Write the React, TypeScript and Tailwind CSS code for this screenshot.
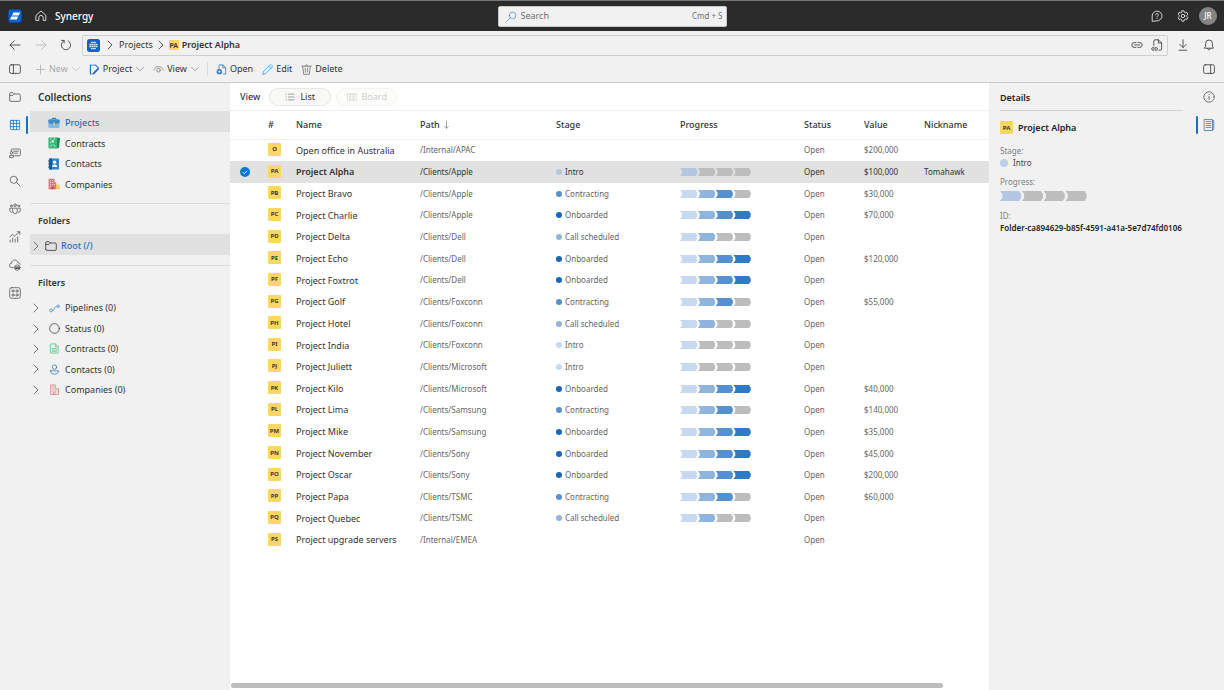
import { ReactNode } from "react";
import clsx from "clsx";

// Small line icons drawn on a 12px grid
function Icon({ children, className }: { children: ReactNode; className?: string }) {
  return (
    <svg
      viewBox="0 0 12 12"
      fill="none"
      stroke="currentColor"
      strokeWidth="0.8"
      strokeLinecap="round"
      strokeLinejoin="round"
      className={clsx("shrink-0", className)}
      aria-hidden="true"
    >
      {children}
    </svg>
  );
}

const paths = {
  home: <path d="M1.2 5.2 6 1l4.8 4.2v5.2h-2.6V7.6a2.2 2.2 0 0 0-4.4 0v2.8H1.2z" />,
  help: (
    <>
      <path d="M1.2 10.9V6A4.9 4.9 0 1 1 6 10.9z" />
      <path d="M4.7 4.8c0-1.8 2.7-1.7 2.7 0C7.4 5.8 6 5.9 6 7M6 8.5v.1" />
    </>
  ),
  gear: (
    <>
      <path d="m5 .8h2l.4 1.5 1 .6 1.5-.5 1 1.8-1.1 1.1v1.3l1.1 1.1-1 1.8-1.5-.5-1 .6L7 11.2H5l-.4-1.6-1-.6-1.5.5-1-1.8 1.1-1.1V5.3L1.1 4.2l1-1.8 1.5.5 1-.6z" />
      <circle cx="6" cy="6" r="1.7" />
    </>
  ),
  back: <path d="M11 6H1M5.2 1.8 1 6l4.2 4.2" />,
  forward: <path d="M1 6h10M6.8 1.8 11 6l-4.2 4.2" />,
  refresh: <path d="M1.6 1.4h2.6V4M8.2 1.9a4.7 4.7 0 1 1-4.3-.1" />,
  chevron: <path d="M4 2l4 4-4 4" />,
  down: <path d="M1.8 4 6 8.2 10.2 4" />,
  panelLeft: (
    <>
      <rect x=".6" y="1.8" width="10.8" height="8.6" rx="1.6" />
      <path d="M4.4 1.8v8.6" />
    </>
  ),
  panelRight: (
    <>
      <rect x=".6" y="1.8" width="10.8" height="8.6" rx="1.6" />
      <path d="M7.6 1.8v8.6" />
    </>
  ),
  plus: <path d="M6 1.2v9.6M1.2 6h9.6" />,
  project: (
    <>
      <path d="M5 10.8H1.6V1.2h5.2l3.4 3" />
      <path d="M6.8 1.2h.6l3 3.2v1.2l-4.6 5-1.2.2.4-1.6 5-4.8" fill="currentColor" />
      <path d="M1.6 1.2v9.6" strokeWidth="1.2" />
    </>
  ),
  eye: (
    <>
      <path d="M.8 6.6C2 3.8 4 2.8 6 2.8s4 1 5.2 3.8" />
      <circle cx="6" cy="6.8" r="2" />
    </>
  ),
  open: (
    <>
      <path d="M3.4 4.6V1h4l3.2 3.2V11H8M7.4 1v3.2h3.2" />
      <circle cx="3.6" cy="8.4" r="2.9" fill="currentColor" stroke="none" />
      <path d="M3.6 7v2.8M2.2 8.4H5" stroke="#fff" />
    </>
  ),
  edit: <path d="m1 11 .8-3.2L8.4 1.2a1.3 1.3 0 0 1 2 0l.4.4a1.3 1.3 0 0 1 0 2L4.2 10.2zM7.2 2.4l2.4 2.4" />,
  trash: <path d="M.8 2.4h10.4M4.4 2.4c0-2 3.2-2 3.2 0M1.9 2.4l1 8.8h6.2l1-8.8M4.8 4.6v4.2M7.2 4.6v4.2" />,
  link: <path d="M5 8.4H3.2a2.4 2.4 0 0 1 0-4.8H5M7 3.6h1.8a2.4 2.4 0 0 1 0 4.8H7M3.6 6h4.8" />,
  fileLink: (
    <>
      <path d="M2.8 6.6V2A1.2 1.2 0 0 1 4 .8h3.4l3.2 3.2v6A1.2 1.2 0 0 1 9.4 11.2H8M7.4.8V4h3.2" />
      <path d="M2.8 11.2H2a1.3 1.3 0 0 1 0-2.6h.8M4.4 8.6h.8a1.3 1.3 0 0 1 0 2.6h-.8M2.6 9.9h2" />
    </>
  ),
  download: <path d="M6 .8v7.6M2.8 5.4 6 8.6l3.2-3.2M2 11.2h8" />,
  bell: <path d="M1.6 9.2h8.8L9.4 7V4.4a3.4 3.4 0 0 0-6.8 0V7zM4.6 9.4c.2 2 2.6 2 2.8 0" />,
  folder: <path d="M.7 9.2V2.8a1.2 1.2 0 0 1 1.2-1.2h2l1.4 1.4h4.8a1.2 1.2 0 0 1 1.2 1.2v5a1.2 1.2 0 0 1-1.2 1.2H1.9A1.2 1.2 0 0 1 .7 9.2M.9 4.4h3L5.3 3" />,
  grid: (
    <>
      <rect x="1.4" y="1.4" width="9.2" height="9.2" rx=".8" />
      <path d="M4.4 1.4v9.2M7.6 1.4v9.2M1.4 4.4h9.2M1.4 7.6h9.2" />
    </>
  ),
  chat: (
    <>
      <path d="M2.2 4V3.2A1.2 1.2 0 0 1 3.4 2h6.8a1.2 1.2 0 0 1 1.2 1.2v4.4a1.2 1.2 0 0 1-1.2 1.2H5.8M4.6 4.2h4.8M5.6 6.2h3" />
      <circle cx="2.6" cy="5.8" r="1.3" />
      <path d="M.7 10.2V8.4h3.8v1.8q-1.9 1-3.8 0z" />
    </>
  ),
  search: (
    <>
      <circle cx="4.8" cy="4.8" r="3.6" />
      <path d="m7.5 7.5 3.6 3.6" />
    </>
  ),
  people: (
    <>
      <circle cx="6" cy="2.2" r="1.3" />
      <circle cx="2.3" cy="2.9" r="1" />
      <circle cx="9.7" cy="2.9" r="1" />
      <path d="M3.8 5.2h4.4v3.4a2.2 2.2 0 0 1-4.4 0zM2.4 5.2H.8v2.4a2 2 0 0 0 1.8 1.8M9.6 5.2h1.6v2.4a2 2 0 0 1-1.8 1.8" />
    </>
  ),
  chart: <path d="M1.2 9v2M3.7 7v4M6.2 8.2V11M8.7 5.8V11M.8 5.8l2.6-2.4 2 1.8L10.8.9M8.2.8h2.7v2.6" />,
  cloud: (
    <>
      <path d="M4.4 8.6H2.8a2.2 2.2 0 0 1-.2-4.4C2.8 0 8.6 0 9 3.8c1.2 0 2 .6 2.2 1.6" />
      <circle cx="8.3" cy="8.6" r="2.7" />
      <path d="M6.2 8h4M6.6 9.4h3.4" strokeWidth="1.2" />
    </>
  ),
  apps: (
    <>
      <rect x=".7" y=".7" width="10.6" height="10.6" rx="1.8" />
      <circle cx="4" cy="4" r="1.1" />
      <circle cx="8" cy="4" r="1.1" />
      <circle cx="4" cy="8" r="1.1" />
      <circle cx="8" cy="8" r="1.1" />
    </>
  ),
  pipeline: (
    <>
      <circle cx="2.2" cy="8.2" r="1.6" />
      <circle cx="9.9" cy="3.5" r="1.4" />
      <path d="M3.9 8.2C6.8 8.2 5.2 3.5 8.4 3.5" />
    </>
  ),
  circle: <circle cx="6" cy="6" r="5.3" />,
  doc: <path d="M2 1h5l3 3v7H2zM7 1v3h3M3.8 6h4.4M3.8 7.7h4.4M3.8 9.4h4.4" strokeWidth="0.7" />,
  person: (
    <>
      <circle cx="6" cy="3.4" r="2.4" />
      <path d="M1.6 7.4h8.8c.4 5-9.2 5-8.8 0z" />
    </>
  ),
  building: <path d="M1.8 11V1h5v4.2h3.6V11zM3.3 2.8h.4M5 2.8h.4M3.3 4.6h.4M5 4.6h.4M3.3 6.4h.4M5 6.4h.4M6.9 6.8h.3M8.8 6.8h.3M3.3 8.4h.4M5.2 8.4h.4M6.9 8.6h.3M8.8 8.6h.3M4.4 11V9.6h2.2V11" />,
  info: (
    <>
      <circle cx="6" cy="6" r="5.2" />
      <path d="M6 5.4v3.2M6 3.4v.1" />
    </>
  ),
  properties: <path d="M1.5.5h8v11h-8zM9.5 1.5h1.2v9H9.5M3 2.5h5M3 4.5h5M3 6.5h5M3 8.5h5" strokeWidth="0.7" />,
  list: <path d="M4 2.6h7M4 6h7M4 9.4h7M1.2 2.6h.3M1.2 6h.3M1.2 9.4h.3" />,
  board: <path d="M1 2h2.4v8H1zM4.8 2h2.4v8H4.8zM8.6 2H11v8H8.6z" />,
  sort: <path d="M6 1v10M3.6 8.6 6 11l2.4-2.4" />,
};

type IconName = keyof typeof paths;

function Glyph({ name, className, size = "size-3" }: { name: IconName; className?: string; size?: string }) {
  return <Icon className={clsx(size, className)}>{paths[name]}</Icon>;
}

function IconButton({ name, label, className }: { name: IconName; label: string; className?: string }) {
  return (
    <button aria-label={label} className={clsx("flex shrink-0", className)}>
      <Glyph name={name} />
    </button>
  );
}

const briefcase = (
  <svg viewBox="0 0 12 12" className="size-3 shrink-0" aria-hidden="true">
    <path d="M4 3V1.4h4V3" fill="none" stroke="#2a6fb0" />
    <rect x=".4" y="2.6" width="11.2" height="8.4" rx="1" fill="#83b9ea" />
    <path d="M.4 3.4q0-.8.8-.8h9.6q.8 0 .8.8V6L6 7.4.4 6z" fill="#3c8bd0" />
    <path d="M5.2 5.4h1.6v2.2L6 8.6l-.8-1z" fill="#ffd04d" />
  </svg>
);

const contract = (
  <svg viewBox="0 0 12 12" className="size-3 shrink-0" aria-hidden="true">
    <path d="m8 .6 4 .4-1 9.8-3 .6z" fill="#138a4f" />
    <rect x=".4" y=".4" width="8.8" height="11.2" rx=".8" fill="#3db77b" />
    <path d="M2 2h1.2M2 5.4h1.2M5.8 2h1.2M2.4 9.4 4 7.6M5.6 7.6l1.6 2" stroke="#e2f6ea" strokeWidth=".9" />
    <circle cx="4.8" cy="4.4" r="1.3" fill="#e2f6ea" />
  </svg>
);

const contact = (
  <svg viewBox="0 0 12 12" className="size-3 shrink-0" aria-hidden="true">
    <rect x="1" y=".4" width="10" height="11.2" rx=".8" fill="#2f86cf" />
    <path d="M1 1.2q0-.8.8-.8H4v11.2H1.8q-.8 0-.8-.8z" fill="#175b9c" />
    <path d="M0 3h1.6M0 6h1.6M0 9h1.6" stroke="#175b9c" />
    <circle cx="6.6" cy="4.2" r="1.6" fill="#fff" />
    <path d="M4 9c0-3.2 5.2-3.2 5.2 0z" fill="#fff" />
  </svg>
);

const company = (
  <svg viewBox="0 0 12 12" className="size-3 shrink-0" aria-hidden="true">
    <path d="M.6.8h6v3.4h1.6v7H.6z" fill="#e0767a" />
    <path d="M8 6.6h3.6v4.6H8z" fill="#f6c544" />
    <path d="M2 2.6h1M4.2 2.6h1M2 4.6h1M4.2 4.6h1M2 6.6h1M4.2 6.6h1M2 8.6h1M6 6.6h1" stroke="#fbe3e3" />
    <path d="M3.6 11.2V9h1.8v2.2z" fill="#a83c46" />
    <path d="M9 8h.8M10.4 8h.6M9 9.8h.8" stroke="#fff3cf" strokeWidth=".8" />
  </svg>
);

const collections = [
  { label: "Projects", icon: briefcase },
  { label: "Contracts", icon: contract },
  { label: "Contacts", icon: contact },
  { label: "Companies", icon: company },
];

const filters: { label: string; icon: IconName; color: string }[] = [
  { label: "Pipelines (0)", icon: "pipeline", color: "text-[#3a96dd]" },
  { label: "Status (0)", icon: "circle", color: "text-[#333]" },
  { label: "Contracts (0)", icon: "doc", color: "text-[#3fb877]" },
  { label: "Contacts (0)", icon: "person", color: "text-[#2a72b8]" },
  { label: "Companies (0)", icon: "building", color: "text-[#e57373]" },
];

const railItems: { icon: IconName; label: string }[] = [
  { icon: "folder", label: "Folders" },
  { icon: "grid", label: "Collections" },
  { icon: "chat", label: "Chat" },
  { icon: "search", label: "Search" },
  { icon: "people", label: "Teams" },
  { icon: "chart", label: "Reports" },
  { icon: "cloud", label: "Storage" },
  { icon: "apps", label: "Apps" },
];

const stages = ["Intro", "Call scheduled", "Contracting", "Onboarded"];
const stageColors = ["#c7d9f0", "#8fb4de", "#5590d0", "#1068bf"];
const stepColors = ["#c7d9f0", "#8fb4de", "#5590d0", "#2f7ac6"];

type Row = { code: string; name: string; path: string; stage?: number; value?: string; nickname?: string };

const rows: Row[] = [
  { code: "O", name: "Open office in Australia", path: "/Internal/APAC", value: "$200,000" },
  { code: "PA", name: "Project Alpha", path: "/Clients/Apple", stage: 0, value: "$100,000", nickname: "Tomahawk" },
  { code: "PB", name: "Project Bravo", path: "/Clients/Apple", stage: 2, value: "$30,000" },
  { code: "PC", name: "Project Charlie", path: "/Clients/Apple", stage: 3, value: "$70,000" },
  { code: "PD", name: "Project Delta", path: "/Clients/Dell", stage: 1 },
  { code: "PE", name: "Project Echo", path: "/Clients/Dell", stage: 3, value: "$120,000" },
  { code: "PF", name: "Project Foxtrot", path: "/Clients/Dell", stage: 3 },
  { code: "PG", name: "Project Golf", path: "/Clients/Foxconn", stage: 2, value: "$55,000" },
  { code: "PH", name: "Project Hotel", path: "/Clients/Foxconn", stage: 1 },
  { code: "PI", name: "Project India", path: "/Clients/Foxconn", stage: 0 },
  { code: "PJ", name: "Project Juliett", path: "/Clients/Microsoft", stage: 0 },
  { code: "PK", name: "Project Kilo", path: "/Clients/Microsoft", stage: 3, value: "$40,000" },
  { code: "PL", name: "Project Lima", path: "/Clients/Samsung", stage: 2, value: "$140,000" },
  { code: "PM", name: "Project Mike", path: "/Clients/Samsung", stage: 3, value: "$35,000" },
  { code: "PN", name: "Project November", path: "/Clients/Sony", stage: 3, value: "$45,000" },
  { code: "PO", name: "Project Oscar", path: "/Clients/Sony", stage: 3, value: "$200,000" },
  { code: "PP", name: "Project Papa", path: "/Clients/TSMC", stage: 2, value: "$60,000" },
  { code: "PQ", name: "Project Quebec", path: "/Clients/TSMC", stage: 1 },
  { code: "PS", name: "Project upgrade servers", path: "/Internal/EMEA" },
];

function Progress({ stage, muted, className }: { stage: number; muted?: boolean; className: string }) {
  return (
    <svg viewBox="0 0 71 8" preserveAspectRatio="none" className={className} role="img" aria-label={`Step ${stage + 1} of 4`}>
      {stepColors.map((color, i) => (
        <path
          key={i}
          transform={`translate(${i * 17.8} 0)`}
          d="M0 0h15.6l1.7 2.6v2.8L15.6 8H0l1.9-2.6V2.6z"
          fill={i > stage ? "#bdbdbd" : muted ? "#b3c7e1" : color}
        />
      ))}
    </svg>
  );
}

function Badge({ code }: { code: string }) {
  return (
    <span className="flex size-[13px] shrink-0 items-center justify-center rounded-[1px] bg-[#ffd666] text-[6px] leading-none font-bold text-[#40382a]">
      {code}
    </span>
  );
}

function ToolButton({ icon, label, color, menu, disabled }: { icon: IconName; label: string; color?: string; menu?: boolean; disabled?: boolean }) {
  return (
    <button disabled={disabled} className={clsx("flex items-center gap-[3px]", disabled && "text-[#a8a8a8]")}>
      <Glyph name={icon} size="size-[11px]" className={color} />
      {label}
      {menu && <Glyph name="down" size="size-[10px]" className={disabled ? "text-[#b5b5b5]" : "text-[#777]"} />}
    </button>
  );
}

function Header() {
  return (
    <header className="grid h-[31px] grid-cols-[1fr_229px_1fr] items-center border-t border-[#777] bg-[#2b2b2b] px-2 text-white">
      <div className="flex items-center">
        <svg viewBox="0 0 14 14" className="size-[14px]" aria-hidden="true">
          <rect x=".5" y=".5" width="13" height="13" rx="2" fill="#0b63d1" />
          <path d="M5.4 3.6h6.8L10.6 6.6H4zM3.4 7.4h6.8L8.8 10.4H2z" fill="#fff" />
        </svg>
        <IconButton name="home" label="Home" className="ml-[13px]" />
        <span className="ml-2 text-[10px] font-medium">Synergy</span>
      </div>
      <label className="flex h-[21px] items-center rounded-[2px] border border-[#c8c8c8] bg-[#f1f1f1] px-[7px] text-[#707070]">
        <Glyph name="search" size="size-[11px]" className="-scale-x-100 text-[#3a8fdc]" />
        <input
          type="search"
          aria-label="Search"
          placeholder="Search"
          className="ml-[4px] min-w-0 flex-1 bg-transparent text-[9px] outline-none placeholder:text-[#707070]"
        />
        <kbd className="-mr-[4px] font-[inherit] text-[8px]">Cmd + S</kbd>
      </label>
      <div className="flex items-center justify-end gap-[14px]">
        <IconButton name="help" label="Help" />
        <IconButton name="gear" label="Settings" />
        <button className="-mr-[1px] -ml-[4px] flex size-[18px] items-center justify-center rounded-full bg-[#848484] text-[8px] font-medium">JR</button>
      </div>
    </header>
  );
}

function AddressBar() {
  return (
    <div className="flex h-[28px] items-center px-[9px]">
      <IconButton name="back" label="Back" />
      <IconButton name="forward" label="Forward" className="ml-[14px] text-[#b3b3b3]" />
      <IconButton name="refresh" label="Refresh" className="ml-[13px]" />
      <nav aria-label="Breadcrumb" className="ml-[10px] flex h-[21px] flex-1 items-center rounded-[2px] border border-[#cfcfcf] px-1">
        <svg viewBox="0 0 13 13" className="size-[13px]" aria-hidden="true">
          <rect width="13" height="13" rx="2.5" fill="#0b63d1" />
          <path d="M4 3.4h5M2.4 5.5h8.2M2.4 7.5h8.2M4 9.6h5" stroke="#d6e7fb" strokeWidth="1.4" strokeDasharray="1.8 .3" />
        </svg>
        <Glyph name="chevron" className="ml-1" />
        <a href="#projects" className="ml-[3px]">Projects</a>
        <Glyph name="chevron" className="mx-[2px]" />
        <a href="#alpha" className="flex items-center gap-[3px] font-semibold">
          <span className="flex size-[10px] items-center justify-center bg-[#ffd666] text-[7px] leading-none">PA</span>
          Project Alpha
        </a>
        <div className="ml-auto flex gap-2">
          <IconButton name="link" label="Copy link" />
          <IconButton name="fileLink" label="File link" />
        </div>
      </nav>
      <IconButton name="download" label="Downloads" className="ml-[9px]" />
      <IconButton name="bell" label="Notifications" className="ml-[14px]" />
    </div>
  );
}

function Toolbar() {
  return (
    <div className="flex h-6 items-center border-b border-[#cbcbcb] px-[9px] pb-[3px]">
      <IconButton name="panelLeft" label="Toggle navigation" />
      <div className="ml-[14px] flex items-center gap-2">
        <ToolButton icon="plus" label="New" menu disabled />
        <ToolButton icon="project" label="Project" color="text-[#1d6fc4]" menu />
        <ToolButton icon="eye" label="View" color="text-[#777]" menu />
      </div>
      <div className="ml-[7px] flex items-center gap-[9px] border-l border-[#dadada] pl-2">
        <ToolButton icon="open" label="Open" color="text-[#1d6fc4]" />
        <ToolButton icon="edit" label="Edit" color="text-[#3a8fdc]" />
        <ToolButton icon="trash" label="Delete" color="text-[#666]" />
      </div>
      <IconButton name="panelRight" label="Toggle details" className="ml-auto" />
    </div>
  );
}

function Sidebar() {
  return (
    <aside className="w-[200px] shrink-0">
      <h2 className="px-2 pt-2 text-[10px] leading-[13px] font-semibold">Collections</h2>
      <ul className="mt-[7px] grid h-[82px] auto-rows-fr">
        {collections.map((item, i) => (
          <li key={item.label}>
            <a
              href={`#${item.label}`}
              className={clsx("flex h-full items-center gap-[5px] pt-[3px] pl-[18px]", i === 0 && "bg-[#e1e1e1] font-medium text-[#1b6ec2]")}
            >
              {item.icon}
              {item.label}
            </a>
          </li>
        ))}
      </ul>
      <hr className="mt-[10px] border-[#dcdcdc]" />
      <h3 className="mt-[11px] px-2 leading-[12px] font-semibold">Folders</h3>
      <button className="mt-[7px] flex h-[21px] w-full items-center bg-[#e1e1e1] pt-[3px] font-medium text-[#1b6ec2]">
        <Glyph name="chevron" className="text-[#555]" />
        <Glyph name="folder" className="mr-1 ml-[3px] text-[#333]" />
        Root (/)
      </button>
      <hr className="mt-[10px] border-[#dcdcdc]" />
      <h3 className="mt-[11px] px-2 leading-[12px] font-semibold">Filters</h3>
      <ul className="mt-[9px] grid h-[102px] auto-rows-fr">
        {filters.map((item) => (
          <li key={item.label} className="flex">
            <button className="flex w-full items-center">
              <Glyph name="chevron" className="text-[#555]" />
              <Glyph name={item.icon} size="size-[11px]" className={clsx("mr-[5px] ml-[7px]", item.color)} />
              {item.label}
            </button>
          </li>
        ))}
      </ul>
    </aside>
  );
}

function ProjectTable() {
  return (
    <table className="h-[440px] w-full table-fixed border-collapse text-left text-[8px] text-[#666]">
      <colgroup>
        <col className="w-[38px]" />
        <col className="w-[28px]" />
        <col className="w-[124px]" />
        <col className="w-[136px]" />
        <col className="w-[124px]" />
        <col className="w-[124px]" />
        <col className="w-[60px]" />
        <col className="w-[60px]" />
        <col />
      </colgroup>
      <thead>
        <tr className="h-[28px] border-b border-[#eee] text-[9px] text-[#333] [&>th]:font-medium">
          <th aria-label="Selected" />
          <th>#</th>
          <th>Name</th>
          <th>
            <span className="flex items-center gap-[2px]">
              Path <Glyph name="sort" size="size-[9px]" className="text-[#666]" />
            </span>
          </th>
          <th>Stage</th>
          <th>Progress</th>
          <th>Status</th>
          <th>Value</th>
          <th>Nickname</th>
        </tr>
      </thead>
      <tbody>
        {rows.map((row) => {
          const selected = row.code === "PA";
          return (
            <tr key={row.code} className={clsx(selected && "bg-[#e1e1e1] text-[#333]")}>
              <td className="pl-[10px]">
                {selected && (
                  <svg viewBox="0 0 10 10" className="size-[10px]" role="img" aria-label="Selected">
                    <circle cx="5" cy="5" r="5" fill="#0b76d4" />
                    <path d="m2.8 5.2 1.5 1.5 2.9-3" fill="none" stroke="#fff" />
                  </svg>
                )}
              </td>
              <td className="pb-[2px]">
                <Badge code={row.code} />
              </td>
              <td className={clsx("text-[9px] text-[#333]", selected && "font-semibold")}>{row.name}</td>
              <td>{row.path}</td>
              <td>
                {row.stage !== undefined && (
                  <span className="flex items-center gap-[3px] leading-[12px]">
                    <span
                      className="size-[6px] rounded-full"
                      style={{ backgroundColor: selected ? "#b3c7e1" : stageColors[row.stage] }}
                    />
                    {stages[row.stage]}
                  </span>
                )}
              </td>
              <td>{row.stage !== undefined && <Progress stage={row.stage} muted={selected} className="h-2 w-[71px]" />}</td>
              <td>Open</td>
              <td>{row.value}</td>
              <td>{row.nickname}</td>
            </tr>
          );
        })}
      </tbody>
    </table>
  );
}

function Details() {
  return (
    <aside className="w-[205px] shrink-0 px-[11px] text-[8px] text-[#7a7f85]">
      <h2 className="border-b border-[#d2d2d2] pt-2 pb-[6px] text-[9px] leading-[13px] font-semibold text-[#222]">Details</h2>
      <div className="mt-[10px] flex items-center gap-[5px] text-[9px] leading-[13px] font-semibold text-[#222]">
        <Badge code="PA" />
        Project Alpha
      </div>
      <dl className="mt-[11px] leading-[12px]">
        <dt>Stage:</dt>
        <dd className="flex items-center gap-[5px] text-[#444]">
          <span className="size-2 rounded-full bg-[#bccfe8]" />
          Intro
        </dd>
        <dt className="mt-[7px]">Progress:</dt>
        <dd className="mt-[3px]">
          <Progress stage={0} muted className="h-[10px] w-[87px]" />
        </dd>
        <dt className="mt-[9px]">ID:</dt>
        <dd className="font-semibold whitespace-nowrap text-[#222]">Folder-ca894629-b85f-4591-a41a-5e7d74fd0106</dd>
      </dl>
    </aside>
  );
}

export default function App() {
  return (
    <div className="flex h-screen flex-col overflow-hidden bg-[#f1f1f1] font-['Noto_Sans','Open_Sans',sans-serif] text-[9px] text-[#333]">
      <Header />
      <AddressBar />
      <Toolbar />
      <div className="flex min-h-0 flex-1">
        <nav aria-label="Main" className="flex w-[30px] shrink-0 flex-col text-[#555]">
          {railItems.map((item, i) => (
            <button
              key={item.label}
              aria-label={item.label}
              className={clsx("relative flex h-7 items-center justify-center", i === 1 && "text-[#1b6ec2]")}
            >
              <Glyph name={item.icon} />
              {i === 1 && <span className="absolute right-[2px] h-[18px] w-[2px] rounded-full bg-[#1b6ec2]" />}
            </button>
          ))}
        </nav>
        <Sidebar />
        <main className="flex min-w-0 flex-1 flex-col bg-white">
          <div className="flex h-[28px] items-center gap-[5px] border-b border-[#eee] pl-[10px] font-medium">
            View
            <button className="ml-[4px] flex h-[18px] w-[62px] items-center justify-center gap-[5px] rounded-full border border-[#e6e6e4] bg-[#f8f8f6] font-normal">
              <Glyph name="list" size="size-[10px]" className="text-[#777]" />
              List
            </button>
            <button
              disabled
              className="flex h-[18px] w-[61px] items-center justify-center gap-[5px] rounded-full border border-[#f3f3f1] bg-[#fcfcfb] font-normal text-[#cfcfcf]"
            >
              <Glyph name="board" size="size-[10px]" />
              Board
            </button>
          </div>
          <ProjectTable />
          <div className="mt-auto mb-[2px] px-px">
            <div className="h-[5px] w-[94%] rounded-full bg-[#bdbdbd]" />
          </div>
        </main>
        <Details />
        <nav aria-label="Details tabs" className="flex w-[30px] shrink-0 flex-col text-[#555]">
          <button aria-label="Info" className="flex h-7 items-center justify-center">
            <Glyph name="info" />
          </button>
          <button aria-label="Properties" className="relative flex h-7 items-center justify-center text-[#1b6ec2]">
            <span className="absolute left-[2px] h-[18px] w-[2px] rounded-full bg-[#1b6ec2]" />
            <Glyph name="properties" />
          </button>
        </nav>
      </div>
    </div>
  );
}
